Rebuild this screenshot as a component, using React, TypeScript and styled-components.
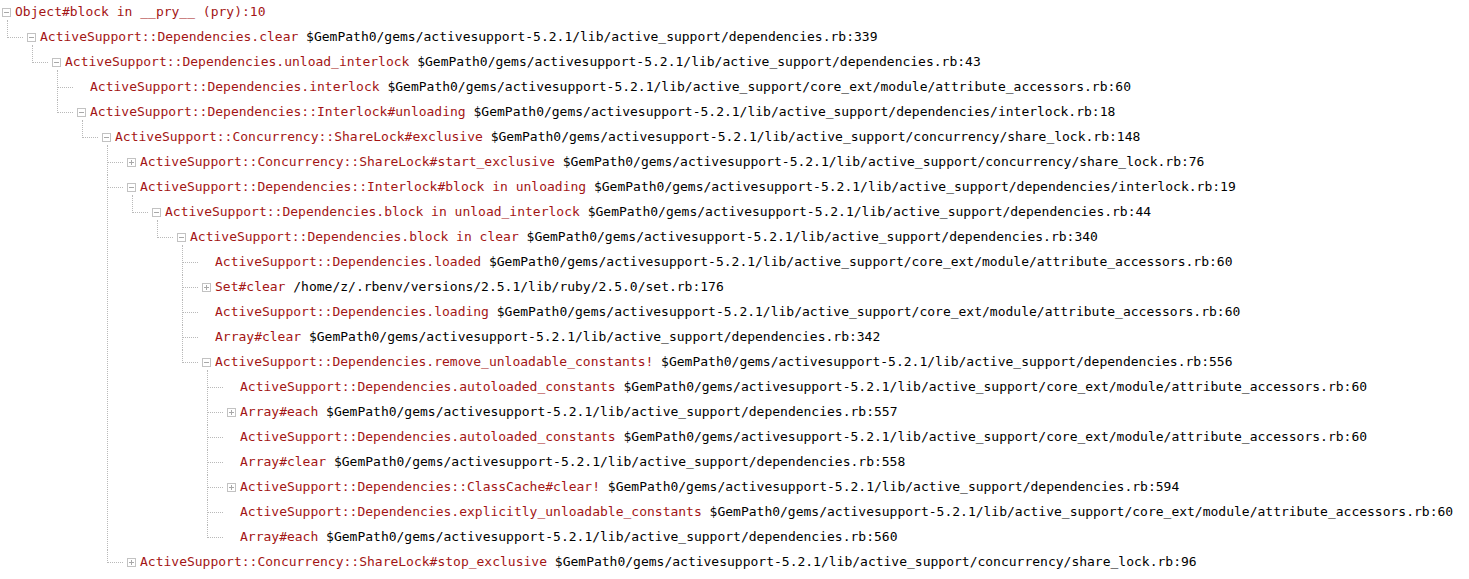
import React from "react";
import styled, { createGlobalStyle, css } from "styled-components";

const Global = createGlobalStyle`
  html, body { margin: 0; padding: 0; background: #ffffff; }
  body { font-family: "DejaVu Sans Mono", monospace; }
`;

type Toggle = "minus" | "plus" | undefined;
interface TreeNode {
  name: string;
  loc?: string;
  toggle?: Toggle;
  children?: TreeNode[];
}

const P = "$GemPath0/gems/activesupport-5.2.1/lib/active_support/";
const AA = P + "core_ext/module/attribute_accessors.rb:60";

const data: TreeNode = {
  name: "Object#block in __pry__ (pry):10",
  toggle: "minus",
  children: [
    {
      name: "ActiveSupport::Dependencies.clear",
      loc: P + "dependencies.rb:339",
      toggle: "minus",
      children: [
        {
          name: "ActiveSupport::Dependencies.unload_interlock",
          loc: P + "dependencies.rb:43",
          toggle: "minus",
          children: [
            { name: "ActiveSupport::Dependencies.interlock", loc: AA },
            {
              name: "ActiveSupport::Dependencies::Interlock#unloading",
              loc: P + "dependencies/interlock.rb:18",
              toggle: "minus",
              children: [
                {
                  name: "ActiveSupport::Concurrency::ShareLock#exclusive",
                  loc: P + "concurrency/share_lock.rb:148",
                  toggle: "minus",
                  children: [
                    {
                      name: "ActiveSupport::Concurrency::ShareLock#start_exclusive",
                      loc: P + "concurrency/share_lock.rb:76",
                      toggle: "plus",
                    },
                    {
                      name: "ActiveSupport::Dependencies::Interlock#block in unloading",
                      loc: P + "dependencies/interlock.rb:19",
                      toggle: "minus",
                      children: [
                        {
                          name: "ActiveSupport::Dependencies.block in unload_interlock",
                          loc: P + "dependencies.rb:44",
                          toggle: "minus",
                          children: [
                            {
                              name: "ActiveSupport::Dependencies.block in clear",
                              loc: P + "dependencies.rb:340",
                              toggle: "minus",
                              children: [
                                { name: "ActiveSupport::Dependencies.loaded", loc: AA },
                                {
                                  name: "Set#clear",
                                  loc: "/home/z/.rbenv/versions/2.5.1/lib/ruby/2.5.0/set.rb:176",
                                  toggle: "plus",
                                },
                                { name: "ActiveSupport::Dependencies.loading", loc: AA },
                                { name: "Array#clear", loc: P + "dependencies.rb:342" },
                                {
                                  name: "ActiveSupport::Dependencies.remove_unloadable_constants!",
                                  loc: P + "dependencies.rb:556",
                                  toggle: "minus",
                                  children: [
                                    { name: "ActiveSupport::Dependencies.autoloaded_constants", loc: AA },
                                    { name: "Array#each", loc: P + "dependencies.rb:557", toggle: "plus" },
                                    { name: "ActiveSupport::Dependencies.autoloaded_constants", loc: AA },
                                    { name: "Array#clear", loc: P + "dependencies.rb:558" },
                                    {
                                      name: "ActiveSupport::Dependencies::ClassCache#clear!",
                                      loc: P + "dependencies.rb:594",
                                      toggle: "plus",
                                    },
                                    {
                                      name: "ActiveSupport::Dependencies.explicitly_unloadable_constants",
                                      loc: AA,
                                    },
                                    { name: "Array#each", loc: P + "dependencies.rb:560" },
                                  ],
                                },
                              ],
                            },
                          ],
                        },
                      ],
                    },
                    {
                      name: "ActiveSupport::Concurrency::ShareLock#stop_exclusive",
                      loc: P + "concurrency/share_lock.rb:96",
                      toggle: "plus",
                    },
                  ],
                },
              ],
            },
          ],
        },
      ],
    },
  ],
};

const LINE = "#b9b9b9";

const Tree = styled.ul`
  list-style: none;
  margin: 0;
  padding: 0;
`;

const Children = styled.ul`
  list-style: none;
  margin: 0;
  padding: 0 0 0 25px;
`;

const Item = styled.li<{ $root?: boolean }>`
  position: relative;
  ${(p) =>
    !p.$root &&
    css`
      &::before {
        content: "";
        position: absolute;
        left: -18px;
        top: 0;
        bottom: 0;
        border-left: 1px dotted ${LINE};
      }
      &:first-child::before {
        top: -5px;
      }
      &:last-child::before {
        bottom: calc(100% - 13px);
      }
      &::after {
        content: "";
        position: absolute;
        left: -18px;
        top: 12px;
        width: 16px;
        border-top: 1px dotted ${LINE};
      }
    `}
`;

const Row = styled.div`
  display: flex;
  align-items: flex-start;
  gap: 4px;
  height: 25px;
  padding-left: 2px;
`;

const ToggleIcon = styled.svg`
  flex: none;
  width: 9px;
  height: 9px;
  margin-top: 8px;
  display: block;
`;

const Spacer = styled.span`
  flex: none;
  width: 9px;
`;

const Label = styled.span`
  font-family: "DejaVu Sans Mono", monospace;
  font-size: 13px;
  line-height: 23px;
  white-space: pre;
`;

const Method = styled.span`
  color: #a31515;
`;

const Location = styled.span`
  color: #000000;
`;

function ToggleBox({ kind }: { kind: "minus" | "plus" }) {
  return (
    <ToggleIcon viewBox="0 0 9 9">
      <rect x="0.5" y="0.5" width="8" height="8" fill="#fff" stroke="#c2c2c2" />
      <line x1="2" y1="4.5" x2="7" y2="4.5" stroke="#a8a8a8" />
      {kind === "plus" && <line x1="4.5" y1="2" x2="4.5" y2="7" stroke="#a8a8a8" />}
    </ToggleIcon>
  );
}

function Node({ node, root }: { node: TreeNode; root?: boolean }) {
  return (
    <Item $root={root}>
      <Row>
        {node.toggle ? <ToggleBox kind={node.toggle} /> : <Spacer />}
        <Label>
          <Method>{node.name}</Method>
          {node.loc && <Location>{" " + node.loc}</Location>}
        </Label>
      </Row>
      {node.children && node.children.length > 0 && (
        <Children>
          {node.children.map((c, i) => (
            <Node key={i} node={c} />
          ))}
        </Children>
      )}
    </Item>
  );
}

export default function App() {
  return (
    <>
      <Global />
      <Tree>
        <Node node={data} root />
      </Tree>
    </>
  );
}
